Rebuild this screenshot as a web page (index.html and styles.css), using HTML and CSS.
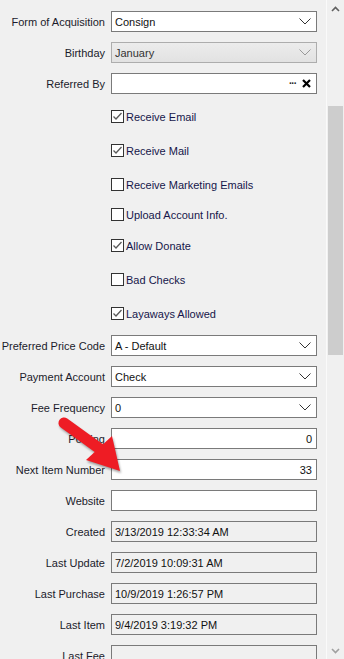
FILE: index.html
```html
<!DOCTYPE html>
<html lang="en">
<head>
    <meta charset="UTF-8">
    <meta name="viewport" content="width=device-width, initial-scale=1.0">
    <title>Account Details</title>
    <link rel="stylesheet" href="styles.css">
</head>
<body>
    <div class="window">
        <div class="form">
            <!-- Top selects -->
            <div class="row first">
                <label class="label">Form of Acquisition</label>
                <div class="field select"><span>Consign</span><svg class="chevron" width="12" height="7" viewBox="0 0 12 7"><polyline points="0.5,0.5 6,6 11.5,0.5"/></svg></div>
            </div>
            <div class="row">
                <label class="label">Birthday</label>
                <div class="field select disabled"><span>January</span><svg class="chevron" width="12" height="7" viewBox="0 0 12 7"><polyline points="0.5,0.5 6,6 11.5,0.5"/></svg></div>
            </div>
            <div class="row">
                <label class="label">Referred By</label>
                <div class="field lookup">
                    <span class="dots">&middot;&middot;&middot;</span>
                    <svg class="clear" width="9" height="9" viewBox="0 0 9 9"><path d="M1 1 L8 8 M8 1 L1 8"/></svg>
                </div>
            </div>

            <!-- Checkboxes -->
            <div class="row check lead">
                <span class="box checked"><svg width="11" height="11" viewBox="0 0 11 11"><polyline points="1.5,5.5 4,8 9.5,2"/></svg></span>
                <span class="check-text">Receive Email</span>
            </div>
            <div class="row check wide">
                <span class="box checked"><svg width="11" height="11" viewBox="0 0 11 11"><polyline points="1.5,5.5 4,8 9.5,2"/></svg></span>
                <span class="check-text">Receive Mail</span>
            </div>
            <div class="row check wide">
                <span class="box"></span>
                <span class="check-text">Receive Marketing Emails</span>
            </div>
            <div class="row check narrow">
                <span class="box"></span>
                <span class="check-text">Upload Account Info.</span>
            </div>
            <div class="row check">
                <span class="box checked"><svg width="11" height="11" viewBox="0 0 11 11"><polyline points="1.5,5.5 4,8 9.5,2"/></svg></span>
                <span class="check-text">Allow Donate</span>
            </div>
            <div class="row check wide">
                <span class="box"></span>
                <span class="check-text">Bad Checks</span>
            </div>
            <div class="row check wide">
                <span class="box checked"><svg width="11" height="11" viewBox="0 0 11 11"><polyline points="1.5,5.5 4,8 9.5,2"/></svg></span>
                <span class="check-text">Layaways Allowed</span>
            </div>

            <!-- Account settings -->
            <div class="row after-checks">
                <label class="label">Preferred Price Code</label>
                <div class="field select"><span>A - Default</span><svg class="chevron" width="12" height="7" viewBox="0 0 12 7"><polyline points="0.5,0.5 6,6 11.5,0.5"/></svg></div>
            </div>
            <div class="row">
                <label class="label">Payment Account</label>
                <div class="field select"><span>Check</span><svg class="chevron" width="12" height="7" viewBox="0 0 12 7"><polyline points="0.5,0.5 6,6 11.5,0.5"/></svg></div>
            </div>
            <div class="row">
                <label class="label">Fee Frequency</label>
                <div class="field select"><span>0</span><svg class="chevron" width="12" height="7" viewBox="0 0 12 7"><polyline points="0.5,0.5 6,6 11.5,0.5"/></svg></div>
            </div>
            <div class="row">
                <label class="label">Posting</label>
                <div class="field number">0</div>
            </div>
            <div class="row">
                <label class="label">Next Item Number</label>
                <div class="field number">33</div>
            </div>
            <div class="row">
                <label class="label">Website</label>
                <div class="field"></div>
            </div>

            <!-- Read only dates -->
            <div class="row">
                <label class="label">Created</label>
                <div class="field readonly">3/13/2019 12:33:34 AM</div>
            </div>
            <div class="row">
                <label class="label">Last Update</label>
                <div class="field readonly">7/2/2019 10:09:31 AM</div>
            </div>
            <div class="row">
                <label class="label">Last Purchase</label>
                <div class="field readonly">10/9/2019 1:26:57 PM</div>
            </div>
            <div class="row">
                <label class="label">Last Item</label>
                <div class="field readonly">9/4/2019 3:19:32 PM</div>
            </div>
            <div class="row">
                <label class="label">Last Fee</label>
                <div class="field readonly"></div>
            </div>
        </div>

        <div class="scrollbar">
            <div class="scroll-btn"><svg width="9" height="6" viewBox="0 0 9 6"><polyline points="1,5 4.5,1.5 8,5"/></svg></div>
            <div class="scroll-track"><div class="scroll-thumb"></div></div>
            <div class="scroll-btn down"><svg width="9" height="6" viewBox="0 0 9 6"><polyline points="1,1 4.5,4.5 8,1"/></svg></div>
        </div>

        <!-- Red callout arrow -->
        <svg class="pointer" width="80" height="70" viewBox="0 0 80 70">
            <line x1="14" y1="12" x2="50" y2="38"/>
            <polygon points="70,60 62,25 36,49"/>
        </svg>
    </div>
</body>
</html>
```

FILE: styles.css
```css
body {
    margin: 0;
    background-color: #f0f0f0;
    font-family: "Liberation Sans", Arial, sans-serif;
    font-size: 11px;
    overflow: hidden;
}

.window {
    position: relative;
    display: flex;
    height: 659px;
    overflow: hidden;
}

.form {
    width: 326px;
    padding-top: 11px;
    display: flex;
    flex-direction: column;
}

.row {
    display: grid;
    grid-template-columns: 105px 206px;
    column-gap: 6px;
    align-items: center;
    flex: none;
    height: 21px;
    margin-top: 10px; /* space between rows */
}

.row.first {
    margin-top: 0;
}

.row.after-checks {
    margin-top: 11px;
}

.label {
    text-align: right;
    color: #1b1b2b;
    white-space: nowrap;
}

.field {
    box-sizing: border-box;
    height: 21px;
    border: 1px solid #7a7a7a;
    background: #fff;
    color: #111;
    display: flex;
    align-items: center;
    padding: 0 4px 0 3px;
    white-space: nowrap;
    overflow: hidden;
}

.select {
    justify-content: space-between;
    padding-right: 5px;
}

.chevron polyline {
    fill: none;
    stroke: #333;
    stroke-width: 1;
}

.select.disabled {
    background: linear-gradient(#ececec, #e2e2e2);
    border-color: #adadad;
    color: #333;
}

.select.disabled .chevron polyline {
    stroke: #999;
}

.lookup {
    justify-content: flex-end;
    gap: 6px;
    padding-right: 5px;
}

.dots {
    font-weight: bold;
    font-size: 10px;
    letter-spacing: -1px;
    color: #222;
}

.clear path {
    stroke: #000;
    stroke-width: 2.2;
}

.number {
    justify-content: flex-end;
}

.readonly {
    background: #f0f0f0;
}

/* Checkbox rows */
.check {
    grid-template-columns: 13px auto;
    column-gap: 2px;
    padding-left: 111px;
}

.check.lead {
    margin-top: 12px;
}

.check.wide {
    margin-top: 13px;
}

.check.narrow {
    margin-top: 9px;
}

.box {
    box-sizing: border-box;
    width: 13px;
    height: 13px;
    border: 1px solid #333;
    background: #fff;
    display: flex;
    align-items: center;
    justify-content: center;
}

.box polyline {
    fill: none;
    stroke: #5a5a5a;
    stroke-width: 1.3;
}

.check-text {
    color: #16164a;
}

/* Scrollbar */
.scrollbar {
    width: 17px;
    border-left: 1px solid #fafafa;
    display: flex;
    flex-direction: column;
}

.scroll-btn {
    height: 17px;
    display: flex;
    align-items: center;
    justify-content: center;
}

.scroll-btn polyline {
    fill: none;
    stroke: #606060;
    stroke-width: 1.6;
}

.scroll-btn.down polyline {
    stroke: #a0a0a0;
}

.scroll-track {
    flex: 1;
}

.scroll-thumb {
    margin: 89px 1px 0 1px;
    height: 249px;
    background: #cdcdcd;
}

.pointer {
    position: absolute;
    left: 50px;
    top: 411px;
    filter: drop-shadow(1px 2px 1px rgba(0, 0, 0, 0.35));
}

.pointer line {
    stroke: #ee1c24;
    stroke-width: 11;
    stroke-linecap: round;
}

.pointer polygon {
    fill: #ee1c24;
}
```
